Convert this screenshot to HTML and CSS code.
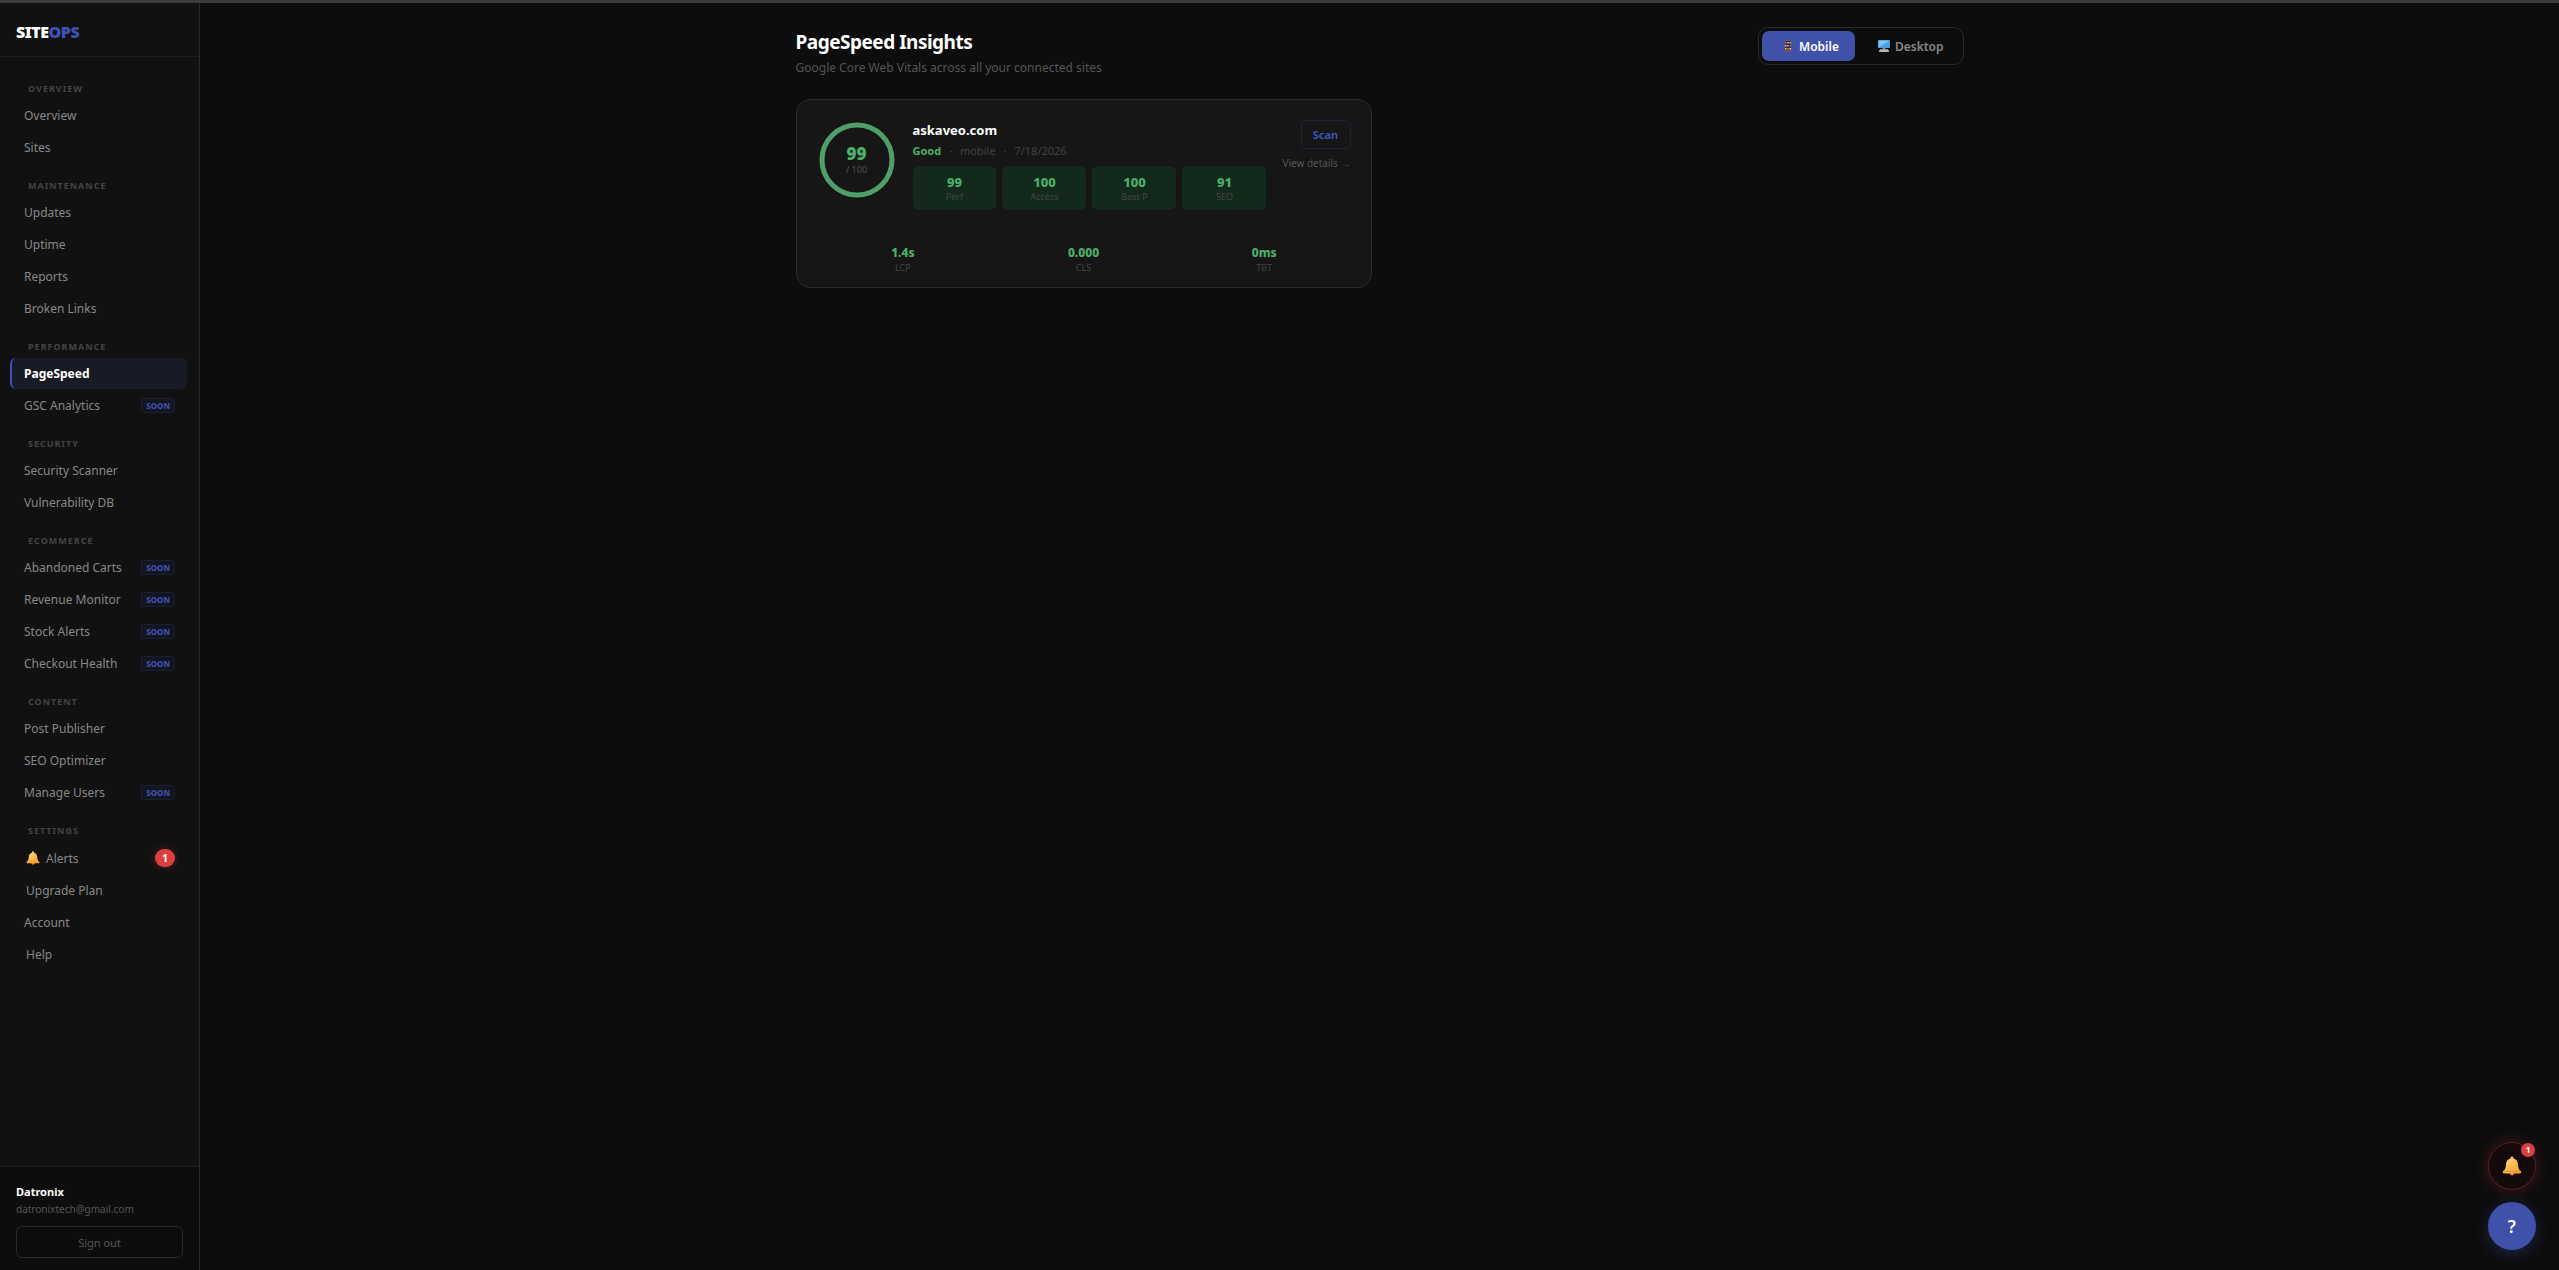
FILE: index.html
```html
<!DOCTYPE html>
<html lang="en">
<head>
    <meta charset="UTF-8" />
    <title>PageSpeed Insights - SiteOps</title>
    <meta name="viewport" content="width=device-width, initial-scale=1.0" />
    <link rel="stylesheet" href="styles.css">
</head>
<body>

<!-- shared icons -->
<svg width="0" height="0" class="defs" aria-hidden="true">
    <defs>
        <linearGradient id="gold" x1="0" y1="0" x2="1" y2="1">
            <stop offset="0" stop-color="#ffe07a" />
            <stop offset="1" stop-color="#f59a2c" />
        </linearGradient>
    </defs>
    <symbol id="bell" viewBox="0 0 20 20">
        <circle cx="10" cy="17.5" r="2" fill="#e8793a" />
        <path d="M10 0.5a1.6 1.6 0 0 1 1.5 1.9c2.8.7 4.3 2.9 4.5 6 .2 3.300.800 5.200 2.700 6.600.9.700.6 2.500-.7 2.500H2c-1.300 0-1.600-1.800-.7-2.500 1.900-1.400 2.500-3.300 2.700-6.600.2-3.100 1.700-5.300 4.500-6A1.600 1.600 0 0 1 10 .5z" fill="url(#gold)" />
        <path d="M1.500 15.300h17" stroke="#f08a2c" stroke-width="1" />
    </symbol>
</svg>

<div class="topline"></div>

<div class="app">
    <aside class="sidebar">
        <div class="logo">SITE<span>OPS</span></div>

        <nav class="nav">
            <h2>Overview</h2>
            <a href="#">Overview</a>
            <a href="#">Sites</a>

            <h2>Maintenance</h2>
            <a href="#">Updates</a>
            <a href="#">Uptime</a>
            <a href="#">Reports</a>
            <a href="#">Broken Links</a>

            <h2>Performance</h2>
            <a href="#" class="active">PageSpeed</a>
            <a href="#">GSC Analytics <span class="soon">SOON</span></a>

            <h2>Security</h2>
            <a href="#">Security Scanner</a>
            <a href="#">Vulnerability DB</a>

            <h2>Ecommerce</h2>
            <a href="#">Abandoned Carts <span class="soon">SOON</span></a>
            <a href="#">Revenue Monitor <span class="soon">SOON</span></a>
            <a href="#">Stock Alerts <span class="soon">SOON</span></a>
            <a href="#">Checkout Health <span class="soon">SOON</span></a>

            <h2>Content</h2>
            <a href="#">Post Publisher</a>
            <a href="#">SEO Optimizer</a>
            <a href="#">Manage Users <span class="soon">SOON</span></a>

            <h2>Settings</h2>
            <a href="#" class="indent alerts"><svg class="nav-icon"><use href="#bell" /></svg>Alerts <span class="count">1</span></a>
            <a href="#" class="indent">Upgrade Plan</a>
            <a href="#">Account</a>
            <a href="#" class="indent">Help</a>
        </nav>

        <div class="user">
            <div class="user-name">Datronix</div>
            <div class="user-email">datronixtech@gmail.com</div>
            <button type="button" class="signout">Sign out</button>
        </div>
    </aside>

    <main class="main">
        <div class="content">
            <header class="page-header">
                <div>
                    <h1>PageSpeed Insights</h1>
                    <p>Google Core Web Vitals across all your connected sites</p>
                </div>
                <div class="toggle">
                    <button type="button" class="selected">
                        <svg width="12" height="12" viewBox="0 0 12 12" aria-hidden="true">
                            <rect x="2" y="0" width="8" height="12" rx="1" fill="#6b5468" />
                            <rect x="3" y="1" width="6" height="9" fill="#31304a" />
                            <path d="M3 2h1.500v1.500H3zM7.500 5h1.500v1.500H7.500z" fill="#e2574c" />
                            <path d="M5.200 2h1.500v1.500H5.200zM3 8h1.500v1.500H3z" fill="#f3c14b" />
                            <path d="M7.500 2h1.500v1.500H7.500zM5.200 5h1.500v1.500H5.200z" fill="#7fc4f5" />
                            <path d="M3 5h1.500v1.500H3zM7.500 8h1.500v1.500H7.500z" fill="#ddd" />
                            <path d="M5.200 8h1.500v1.500H5.200z" fill="#e98a3c" />
                        </svg>
                        Mobile
                    </button>
                    <button type="button">
                        <svg width="12" height="12" viewBox="0 0 12 12" aria-hidden="true">
                            <rect x="0" y="0" width="12" height="8" rx="1" fill="#4f9ede" />
                            <path d="M.8.800h10.400L.8 7.200z" fill="#7cc6f6" />
                            <path d="M4.500 8h3v1.500h-3z" fill="#8a8a8a" />
                            <path d="M2 9.300h8l1.300 2.700H.7z" fill="#b9b4b4" />
                        </svg>
                        Desktop
                    </button>
                </div>
            </header>

            <div class="sites">
                <article class="card">
                    <div class="card-top">
                        <div class="ring">
                            <svg width="80" height="80" viewBox="0 0 80 80" aria-hidden="true">
                                <circle cx="40" cy="40" r="35" fill="none" stroke="#4fa068" stroke-width="5" />
                            </svg>
                            <div class="ring-text">
                                <strong>99</strong>
                                <span>/ 100</span>
                            </div>
                        </div>

                        <div class="info">
                            <h3>askaveo.com</h3>
                            <div class="meta"><b>Good</b><i>·</i>mobile<i>·</i>7/18/2026</div>
                            <div class="scores">
                                <div class="score"><strong>99</strong><span>Perf</span></div>
                                <div class="score"><strong>100</strong><span>Access</span></div>
                                <div class="score"><strong>100</strong><span>Best P</span></div>
                                <div class="score"><strong>91</strong><span>SEO</span></div>
                            </div>
                        </div>

                        <div class="actions">
                            <button type="button" class="scan">Scan</button>
                            <a href="#">View details →</a>
                        </div>
                    </div>

                    <div class="vitals">
                        <div><strong>1.4s</strong><span>LCP</span></div>
                        <div><strong>0.000</strong><span>CLS</span></div>
                        <div><strong>0ms</strong><span>TBT</span></div>
                    </div>
                </article>
            </div>
        </div>
    </main>
</div>

<div class="floating">
    <button type="button" class="fab fab-alert" aria-label="Alerts">
        <svg width="20" height="20"><use href="#bell" /></svg>
        <span class="fab-count">1</span>
    </button>
    <button type="button" class="fab fab-help" aria-label="Help">?</button>
</div>

</body>
</html>
```
FILE: styles.css
```css
* {
  box-sizing: border-box;
  margin: 0;
  padding: 0;
}
body {
  font-family: "Noto Sans", "Liberation Sans", sans-serif;
  font-size: 12px;
  background: #0d0d0d;
  color: #fff;
  min-height: 100vh;
  display: flex;
  flex-direction: column;
}
button {
  font-family: inherit;
  cursor: pointer;
}
a {
  text-decoration: none;
}
.defs {
  position: absolute;
}
.topline {
  height: 3px;
  background: #3c3c3c;
}
.app {
  flex: 1;
  display: flex;
}

/* sidebar */
.sidebar {
  width: 200px;
  flex-shrink: 0;
  display: flex;
  flex-direction: column;
  background: #111;
  border-right: 1px solid #2a2a2a;
}
.logo {
  padding: 18px 16px 13px;
  font-size: 16px;
  line-height: 22px;
  font-weight: 900;
  letter-spacing: -0.5px;
  border-bottom: 1px solid #1e1e1e;
}
.logo span {
  color: #3f51b5;
}
.nav {
  flex: 1;
  padding: 10px 12px 10px 10px;
}
.nav h2 {
  padding: 15px 18px 5px;
  font-size: 9px;
  line-height: 13px;
  font-weight: 700;
  letter-spacing: 1px;
  text-transform: uppercase;
  color: #444;
}
.nav a {
  display: flex;
  align-items: center;
  height: 31px;
  margin-bottom: 1px;
  padding: 0 12px;
  border-left: 2px solid transparent;
  border-radius: 6px;
  color: #888;
}
.nav a.active {
  background: #181a26;
  border-left-color: #3f51b5;
  color: #fff;
  font-weight: 700;
}
.nav a.indent {
  padding-left: 14px;
}
.nav a.alerts {
  height: 32px;
}
.nav-icon {
  width: 14px;
  height: 14px;
  margin-right: 6px;
}
.soon {
  margin-left: auto;
  padding: 0 4px;
  font-size: 8px;
  line-height: 13px;
  font-weight: 800;
  color: #3f51b5;
  background: #14151f;
  border: 1px solid #1c1f38;
  border-radius: 3px;
}
.count {
  margin-left: auto;
  width: 20px;
  font-size: 10px;
  line-height: 18px;
  font-weight: 700;
  text-align: center;
  color: #fff;
  background: #dc3f3f;
  border-radius: 10px;
  box-shadow: 0 0 8px rgba(220, 63, 63, 0.3);
}
.user {
  padding: 16px 16px 12px;
  background: #0d0d0d;
  border-top: 1px solid #1e1e1e;
}
.user-name {
  font-size: 11px;
  line-height: 18px;
  font-weight: 700;
}
.user-email {
  font-size: 10px;
  line-height: 16px;
  color: #555;
}
.signout {
  width: 100%;
  height: 32px;
  margin-top: 9px;
  font-size: 11px;
  color: #555;
  background: none;
  border: 1px solid #2a2a2a;
  border-radius: 6px;
}

/* page */
.main {
  flex: 1;
  padding: 24px 32px;
}
.content {
  max-width: 1168px;
  margin: 0 auto;
}
.page-header {
  display: flex;
  justify-content: space-between;
  align-items: flex-start;
  margin-bottom: 20px;
}
.page-header h1 {
  font-size: 19px;
  line-height: 30px;
  font-weight: 700;
  letter-spacing: -0.5px;
}
.page-header p {
  font-size: 12px;
  line-height: 22px;
  color: #555;
}
.toggle {
  display: flex;
  gap: 3px;
  padding: 3px;
  border: 1px solid #2a2a2a;
  border-radius: 10px;
}
.toggle button {
  display: flex;
  align-items: center;
  gap: 5px;
  height: 30px;
  padding: 0 16px 0 20px;
  font-size: 12px;
  font-weight: 600;
  color: #888;
  background: none;
  border: none;
  border-radius: 7px;
}
.toggle button.selected {
  color: #fff;
  background: #3f51a8;
}
.sites {
  display: grid;
  grid-template-columns: 1fr 1fr;
  gap: 16px;
}
.card {
  padding: 20px 20px 10px;
  background: #161616;
  border: 1px solid #2a2a2a;
  border-radius: 14px;
}
.card-top {
  display: flex;
  gap: 16px;
}
.ring {
  position: relative;
  width: 80px;
  height: 80px;
}
.ring-text {
  position: absolute;
  inset: 0;
  display: flex;
  flex-direction: column;
  align-items: center;
  justify-content: center;
}
.ring-text strong {
  font-size: 17px;
  line-height: 20px;
  font-weight: 900;
  color: #4caf6a;
}
.ring-text span {
  font-size: 9px;
  line-height: 12px;
  color: #555;
}
.info {
  flex: 1;
}
.info h3 {
  font-size: 13px;
  line-height: 20px;
  font-weight: 700;
}
.meta {
  font-size: 11px;
  line-height: 22px;
  margin-bottom: 4px;
  color: #444;
}
.meta b {
  color: #4caf6a;
}
.meta i {
  margin: 0 8px;
}
.scores {
  display: grid;
  grid-template-columns: repeat(4, 1fr);
  gap: 6px;
}
.score {
  padding: 7px 0;
  text-align: center;
  background: #13291b;
  border-radius: 6px;
}
.score strong,
.vitals strong {
  display: block;
  font-size: 13px;
  line-height: 18px;
  font-weight: 800;
  color: #4caf6a;
}
.score span,
.vitals span {
  display: block;
  font-size: 9px;
  line-height: 12px;
  color: #444;
}
.actions {
  display: flex;
  flex-direction: column;
  align-items: flex-end;
  gap: 6px;
}
.scan {
  width: 50px;
  height: 29px;
  font-size: 11px;
  font-weight: 700;
  color: #3f51b5;
  background: none;
  border: 1px solid #20223c;
  border-radius: 6px;
}
.actions a {
  font-size: 10px;
  line-height: 16px;
  color: #555;
}
.vitals {
  display: grid;
  grid-template-columns: repeat(3, 1fr);
  gap: 8px;
  margin-top: 26px;
  padding: 8px 0 3px;
  text-align: center;
}
.vitals strong {
  font-size: 12px;
}

/* floating buttons */
.floating {
  position: fixed;
  right: 23px;
  bottom: 20px;
  display: flex;
  flex-direction: column;
  gap: 12px;
}
.fab {
  position: relative;
  display: flex;
  align-items: center;
  justify-content: center;
  width: 48px;
  height: 48px;
  border-radius: 50%;
}
.fab-alert {
  background: #140a0b;
  border: 1px solid #5a1f24;
  box-shadow: 0 0 16px rgba(220, 63, 63, 0.25);
}
.fab-count {
  position: absolute;
  top: 0;
  right: 0;
  width: 14px;
  font-size: 9px;
  line-height: 14px;
  font-weight: 700;
  color: #fff;
  background: #dc3f3f;
  border-radius: 50%;
}
.fab-help {
  font-size: 18px;
  font-weight: 600;
  color: #fff;
  background: #3f51a8;
  border: none;
  box-shadow: 0 4px 16px rgba(63, 81, 181, 0.35);
}
```
